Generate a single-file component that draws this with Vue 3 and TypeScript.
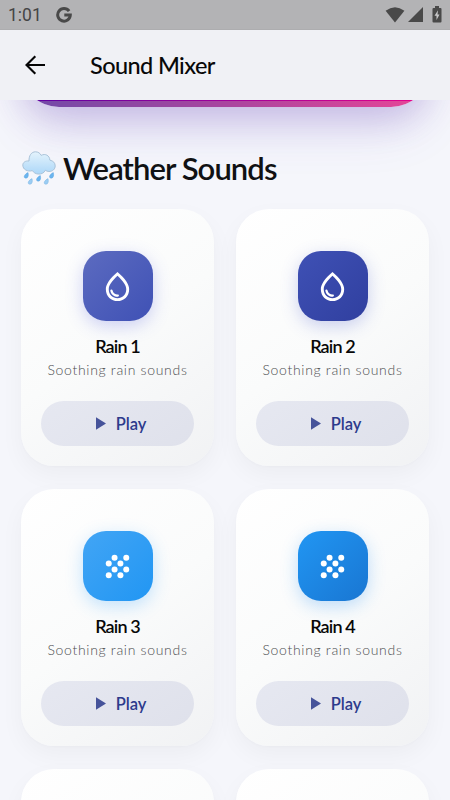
<script setup lang="ts">
interface Sound {
  name: string
  description: string
  icon: 'drop' | 'grain'
  tone: string
}

const sounds: Sound[] = [
  { name: 'Rain 1', description: 'Soothing rain sounds', icon: 'drop', tone: 'indigo' },
  { name: 'Rain 2', description: 'Soothing rain sounds', icon: 'drop', tone: 'deep' },
  { name: 'Rain 3', description: 'Soothing rain sounds', icon: 'grain', tone: 'sky' },
  { name: 'Rain 4', description: 'Soothing rain sounds', icon: 'grain', tone: 'blue' },
]

const grains: [number, number][] = [
  [10, 6], [18, 6], [6, 10], [14, 10], [10, 14], [18, 14], [6, 18], [14, 18],
]
</script>

<template>
  <div class="screen">
    <div class="status">
      <span class="clock">1:01</span>
      <svg class="google" viewBox="0 0 16 16">
        <path d="M13.1 4.1A6.3 6.3 0 1 0 14.3 8H8.3" fill="none" stroke="#494949" stroke-width="3" />
      </svg>
      <span class="spacer"></span>
      <svg class="wifi" viewBox="0 0 20 16"><path d="M.6 3.8Q10-3.2 19.4 3.8L10 15.4z" fill="#494949" /></svg>
      <svg class="signal" viewBox="0 0 15 15"><path d="M15 0v15H0z" fill="#494949" /></svg>
      <svg class="battery" viewBox="0 0 10 17">
        <path d="M3 0h4v2h1.500Q9.500 2 9.500 3v12.500q0 1-1 1h-7q-1 0-1-1V3q0-1 1-1H3z" fill="#494949" />
        <path d="M6 4.200L2.500 9.800h2v4.300l3-5.600h-2z" fill="#c9c9ca" />
      </svg>
    </div>
    <header class="bar">
      <svg class="back" viewBox="0 0 28 28">
        <path d="M24 14H5.800M14.300 5.200L5.500 14l8.800 8.800" fill="none" stroke="#050505" stroke-width="2.100" />
      </svg>
      <h1 class="title">Sound Mixer</h1>
    </header>
    <main class="content">
      <div class="banner"></div>
      <h2 class="heading">
        <svg class="cloud" viewBox="0 0 34 34">
          <defs>
            <linearGradient id="cloudFill" x1="0" y1="0" x2="0" y2="1">
              <stop offset="0" stop-color="#e4f3fc" />
              <stop offset="1" stop-color="#acd7f8" />
            </linearGradient>
          </defs>
          <path
            d="M7 10C6.800 4.500 9.500.800 13.500.800c2.700 0 4.700 1.500 5.700 3.600 4-2.300 8.500.200 8.700 4.800 3.300.600 5.300 2.700 5.300 5.600 0 3.500-2.800 5.800-6.300 5.700-1.500 0-2.600-.500-3.500-1.200-1.300 2.600-4 4-7 3.800-2.700-.200-4.900-1.500-6-3.500-5 1.500-9.600-1.200-9.600-5.500C.800 11.500 3.300 9.600 7 10z"
            fill="url(#cloudFill)" stroke="#a3bdd5" stroke-width=".9"
          />
          <g fill="#6bb5ef" stroke="#529ddb" stroke-width=".4">
            <path d="M6 21.500c.800 2.500.200 5.700-2 5.700-3 0-2.200-3.700 2-5.700z" />
            <path d="M18.300 24.500c.800 2.500.200 5.700-2 5.700-3 0-2.200-3.700 2-5.700z" />
            <path d="M31.300 21.500c.800 2.500.200 5.700-2 5.700-3 0-2.200-3.700 2-5.700z" />
          </g>
          <g fill="#9ccdf3" stroke="#64a9df" stroke-width=".4">
            <path d="M10 27.600c.800 2.500.200 5.700-2 5.700-3 0-2.200-3.700 2-5.700z" />
            <path d="M26 27.600c.800 2.500.200 5.700-2 5.700-3 0-2.200-3.700 2-5.700z" />
          </g>
        </svg>
        <span class="heading-text">Weather Sounds</span>
      </h2>
      <section class="grid">
        <article v-for="s in sounds" :key="s.name" class="card">
          <div class="tile" :class="s.tone">
            <svg viewBox="0 0 24 24" fill="#fff">
              <path
                v-if="s.icon === 'drop'"
                d="M12 2c-5.330 4.550-8 8.480-8 11.800 0 4.980 3.800 8.200 8 8.200s8-3.220 8-8.200c0-3.320-2.670-7.250-8-11.800zm0 18c-3.350 0-6-2.570-6-6.200 0-2.340 1.950-5.440 6-9.140 4.050 3.700 6 6.790 6 9.140 0 3.630-2.650 6.200-6 6.200zm-4.170-6c.370 0 .670.260.740.620.410 2.220 2.280 2.980 3.640 2.870.430-.020.790.320.790.750 0 .400-.320.730-.720.750-2.130.130-4.620-1.090-5.190-4.120-.080-.450.280-.870.740-.870z"
              />
              <template v-else>
                <circle v-for="(g, i) in grains" :key="i" :cx="g[0]" :cy="g[1]" r="2.050" />
              </template>
            </svg>
          </div>
          <h3 class="name">{{ s.name }}</h3>
          <p class="desc">{{ s.description }}</p>
          <button class="play" type="button">
            <svg viewBox="0 0 11 14"><path d="M0 0v14l11-7z" fill="#46539a" /></svg>
            <span>Play</span>
          </button>
        </article>
        <article class="card"></article>
        <article class="card"></article>
      </section>
    </main>
  </div>
</template>

<style>
body {
  margin: 0;
}
</style>

<style scoped>
.screen {
  width: 450px;
  height: 800px;
  overflow: hidden;
  display: flex;
  flex-direction: column;
  background: #f5f6fb;
  font-family: Lato, sans-serif;
}
.status {
  flex: none;
  box-sizing: border-box;
  height: 30px;
  padding: 0 8px;
  display: flex;
  align-items: center;
  background: #b3b3b5;
  border-bottom: 1px solid #adadaf;
  color: #454545;
}
.clock {
  font: 17.5px/30px Roboto, sans-serif;
  width: 33px;
  padding-top: 1px;
  white-space: nowrap;
}
.google {
  width: 16px;
  height: 16px;
  margin-left: 15px;
}
.spacer {
  flex: 1;
}
.wifi {
  width: 20px;
  height: 16px;
}
.signal {
  width: 15px;
  height: 15px;
  margin-left: 3px;
}
.battery {
  width: 10px;
  height: 17px;
  margin-left: 9px;
}
.bar {
  flex: none;
  height: 70px;
  display: flex;
  align-items: center;
  background: #f0f1f5;
}
.back {
  width: 28px;
  height: 28px;
  margin-left: 21px;
}
.title {
  margin: 0 0 0 41px;
  font-size: 23.5px;
  line-height: 30px;
  font-weight: 500;
  letter-spacing: -0.6px;
  color: #080808;
  white-space: nowrap;
}
.content {
  height: 700px;
  padding: 0 21px;
  overflow: hidden;
}
.banner {
  height: 100px;
  margin-top: -93px;
  border-radius: 38px;
  background:
    linear-gradient(90deg, #5a00a0, #a0009a 50%, #e8008a) 0 93px / 100% 1px no-repeat,
    linear-gradient(90deg, #6f4aa8, #a9459f 50%, #e84597);
  box-shadow: 0 12px 35px rgba(92, 50, 170, 0.22), 0 22px 56px -6px rgba(92, 60, 200, 0.14);
}
.heading {
  margin: 42px 0 0;
  height: 38px;
  display: flex;
  align-items: center;
}
.cloud {
  width: 34px;
  height: 34px;
  margin-left: 1px;
}
.heading-text {
  margin-left: 7px;
  font-size: 31px;
  line-height: 38px;
  font-weight: 600;
  letter-spacing: -0.92px;
  color: #101113;
  white-space: nowrap;
}
.grid {
  margin-top: 22px;
  display: grid;
  grid-template-columns: 193px 193px;
  column-gap: 22px;
  row-gap: 23px;
}
.card {
  box-sizing: border-box;
  height: 257px;
  padding: 42px 20px 20px;
  border-radius: 33px;
  display: flex;
  flex-direction: column;
  align-items: center;
  background: linear-gradient(145deg, #ffffff, #fafbfb 50%, #f1f2f4);
  box-shadow: 0 9px 24px rgba(0, 0, 0, 0.04), 0 1px 3px rgba(0, 0, 0, 0.02);
}
.tile {
  flex: none;
  width: 70px;
  height: 70px;
  border-radius: 23px;
  display: grid;
  place-items: center;
}
.tile svg {
  width: 35px;
  height: 35px;
}
.indigo {
  background: linear-gradient(135deg, #5c6bc0, #3f51b5);
  box-shadow: 0 5px 17px rgba(75, 85, 220, 0.26);
}
.deep {
  background: linear-gradient(135deg, #3f51b5, #303f9f);
  box-shadow: 0 5px 17px rgba(63, 81, 200, 0.26);
}
.sky {
  background: linear-gradient(135deg, #42a5f5, #2196f3);
  box-shadow: 0 5px 17px rgba(50, 160, 255, 0.28);
}
.blue {
  background: linear-gradient(135deg, #2196f3, #1976d2);
  box-shadow: 0 5px 17px rgba(33, 140, 243, 0.28);
}
.name {
  margin: 12px 0 0;
  font-size: 18px;
  line-height: 26px;
  font-weight: 600;
  letter-spacing: -0.85px;
  color: #080808;
}
.desc {
  margin: 0;
  font-size: 14px;
  line-height: 22px;
  font-weight: 300;
  letter-spacing: 0.7px;
  color: #4c4e50;
  white-space: nowrap;
}
.play {
  margin: 20px 0 0;
  padding: 0 0 0 7px;
  border: 0;
  width: 153px;
  height: 45px;
  border-radius: 23px;
  display: flex;
  justify-content: center;
  align-items: center;
  gap: 10px;
  background: linear-gradient(145deg, #e6e8f1, #dfe1eb);
  font-family: inherit;
  font-size: 16.5px;
  font-weight: 600;
  line-height: 24px;
  color: #2d3b8c;
}
.play svg {
  width: 10px;
  height: 13px;
}
</style>
